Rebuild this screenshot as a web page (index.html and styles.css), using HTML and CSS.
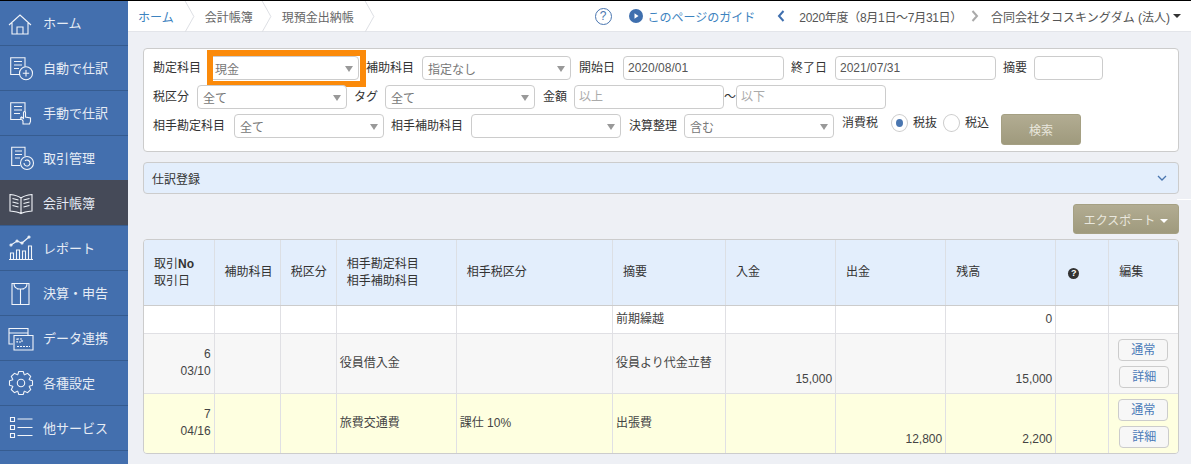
FILE: index.html
```html
<!DOCTYPE html>
<html lang="ja">
<head>
<meta charset="utf-8">
<title>現預金出納帳</title>
<link rel="stylesheet" href="styles.css">
</head>
<body>
<div class="app">
  <nav class="side">
    <a class="nav"><svg class="ni" viewBox="0 0 28 28"><path d="M2 16 13 6l11 10M5 14v11h16V14M10 25v-7h6v7"/></svg>ホーム</a>
    <a class="nav"><svg class="ni" viewBox="0 0 28 28"><path d="M13 20.500H3.700V3.800H18v9M7 7.500h8M7 11h8M7 14.500h5"/><circle cx="19" cy="19.200" r="6.500"/><path d="M19 16v6.400M15.800 19.200h6.400"/></svg>自動で仕訳</a>
    <a class="nav"><svg class="ni" viewBox="0 0 28 28"><path d="M14 20.500H3.700V3.800H18v9M7 7.500h8M7 11h8M7 14.500h6"/><path d="M16 25v-3l-2.500-3 1-1 2 1.500V13.500a1 1 0 0 1 2 0V18l5 1v3.500l-1 2.500z"/></svg>手動で仕訳</a>
    <a class="nav"><svg class="ni" viewBox="0 0 28 28"><path d="M13 21.500H4.700V3.200H18v9M8 7h7M8 10.500h7M8 14h5"/><circle cx="20" cy="19" r="6.500"/><path d="M17 19a3 3 0 1 0 1-2.200"/></svg>取引管理</a>
    <a class="nav on"><svg class="ni" viewBox="0 0 28 28"><path d="M14 9c-3-2.500-7-3-11-3.500V22c4 .4 8 .8 11 2.500 3-1.700 7-2.100 11-2.500V5.500C21 6 17 6.500 14 9zM14 9v15.500M5.500 9.500l6 1.500M5.500 13l6 1.500M5.500 16.500l6 1.500M22.500 9.500l-6 1.500M22.500 13l-6 1.500M22.500 16.500l-6 1.500"/></svg>会計帳簿</a>
    <a class="nav"><svg class="ni" viewBox="0 0 28 28"><path d="M2 25.500h24M3.500 25v-6h3v6M9.500 25v-9h3v9M15.500 25v-8h3v8M21.500 25V12h3v13M4 11l6-4 5 2 7-6"/><circle cx="4" cy="11" r="1"/><circle cx="10" cy="7" r="1"/><circle cx="15" cy="9" r="1"/><circle cx="22" cy="3" r="1"/></svg>レポート</a>
    <a class="nav"><svg class="ni" viewBox="0 0 28 28"><path d="M5 4.500h17v21H5zM7 4.500c0 3 1.500 5 5 5.500M20 4.500c0 3-1.500 5-5 5.500M10 10h7M13.500 10v15.500"/></svg>決算・申告</a>
    <a class="nav"><svg class="ni" viewBox="0 0 28 28"><path d="M6 20H2V4.500h19V11M2 9h19"/><path class="solid" d="M7 11.500h19V26H7z"/><path d="M10 15h5v3h-5zM10 22.500h13" stroke-dasharray="2 1"/></svg>データ連携</a>
    <a class="nav"><svg class="ni" viewBox="-14 -14 28 28"><defs><path id="tooth" d="M-3.300-8.300-2.200-11.500H2.200L3.300-8.300 3.700-8"/></defs><use href="#tooth"/><use href="#tooth" transform="rotate(45)"/><use href="#tooth" transform="rotate(90)"/><use href="#tooth" transform="rotate(135)"/><use href="#tooth" transform="rotate(180)"/><use href="#tooth" transform="rotate(225)"/><use href="#tooth" transform="rotate(270)"/><use href="#tooth" transform="rotate(315)"/><circle r="3.700"/></svg>各種設定</a>
    <a class="nav"><svg class="ni" viewBox="0 0 28 28"><path d="M3.500 3.500h4v4h-4zM3.500 11.500h4v4h-4zM3.500 19.500h4v4h-4zM10.500 5h15M10.500 13.500h15M10.500 21.500h15"/></svg>他サービス</a>
  </nav>

  <main class="main">
    <header class="top">
      <div class="crumbs">
        <a class="crumb link">ホーム</a>
        <svg class="sep" viewBox="0 0 11 32"><path d="M1 0l9 16-9 16"/></svg>
        <span class="crumb mid">会計帳簿</span>
        <svg class="sep" viewBox="0 0 11 32"><path d="M1 0l9 16-9 16"/></svg>
        <span class="crumb">現預金出納帳</span>
        <svg class="sep" viewBox="0 0 11 32"><path d="M1 0l9 16-9 16"/></svg>
      </div>
      <div class="tools">
        <span class="qc">?</span>
        <svg class="play" viewBox="0 0 14 14"><circle cx="7" cy="7" r="7"/><path d="M5.500 4.300 9.500 7l-4 2.700z"/></svg>
        <a class="guide">このページのガイド</a>
        <svg class="arrow left" viewBox="0 0 8 12"><path d="M6.500 1 2 6l4.500 5"/></svg>
        <span class="year">2020年度（8月1日〜7月31日）</span>
        <svg class="arrow right" viewBox="0 0 8 12"><path d="M1.500 1 6 6l-4.500 5"/></svg>
        <span class="corp">合同会社タコスキングダム (法人)</span>
        <i class="caret"></i>
      </div>
    </header>

    <section class="filter">
      <div class="row">
        <label class="lb w56">勘定科目</label>
        <div class="sel s150 hl"><span>現金</span></div>
        <label class="lb w56 m7">補助科目</label>
        <div class="sel s149"><span>指定なし</span></div>
        <label class="lb w44 m8">開始日</label>
        <input class="inp s161" value="2020/08/01">
        <label class="lb w44 m7">終了日</label>
        <input class="inp s161" value="2021/07/31">
        <label class="lb w31 m7">摘要</label>
        <input class="inp s69">
      </div>
      <div class="row">
        <label class="lb w44">税区分</label>
        <div class="sel s150"><span>全て</span></div>
        <label class="lb w31 m7">タグ</label>
        <div class="sel s150"><span>全て</span></div>
        <label class="lb w31 m8">金額</label>
        <input class="inp s150" placeholder="以上">
        <span class="tilde">〜</span>
        <input class="inp s150" placeholder="以下">
      </div>
      <div class="row">
        <label class="lb w81">相手勘定科目</label>
        <div class="sel s150"><span>全て</span></div>
        <label class="lb w80 m7">相手補助科目</label>
        <div class="sel s150"><span></span></div>
        <label class="lb w55 m8">決算整理</label>
        <div class="sel s150"><span>含む</span></div>
        <label class="lb w49 m8 up">消費税</label>
        <span class="radio sel-r"></span><span class="rt">税抜</span>
        <span class="radio"></span><span class="rt">税込</span>
        <button class="btn search">検索</button>
      </div>
    </section>

    <section class="panel">
      <span>仕訳登録</span>
      <svg class="down" viewBox="0 0 10 6"><path d="M1 1l4 4 4-4"/></svg>
    </section>

    <div class="actions">
      <button class="btn export">エクスポート<i class="caret light"></i></button>
    </div>

    <div class="tablewrap">
      <table>
        <colgroup>
          <col class="c71"><col class="c66"><col class="c56"><col class="c120"><col class="c156"><col class="c113"><col class="c110"><col class="c110"><col class="c110"><col class="c53"><col class="c70">
        </colgroup>
        <thead>
          <tr>
            <th class="first">取引<b>No</b><br>取引日</th>
            <th>補助科目</th>
            <th>税区分</th>
            <th>相手勘定科目<br>相手補助科目</th>
            <th>相手税区分</th>
            <th>摘要</th>
            <th>入金</th>
            <th>出金</th>
            <th>残高</th>
            <th><span class="qb">?</span></th>
            <th>編集</th>
          </tr>
        </thead>
        <tbody>
          <tr class="r0">
            <td></td><td></td><td></td><td></td><td></td>
            <td>前期繰越</td><td></td><td></td><td class="num">0</td><td></td><td></td>
          </tr>
          <tr class="r1">
            <td class="num">6<br>03/10</td><td></td><td></td>
            <td>役員借入金</td><td></td>
            <td>役員より代金立替</td>
            <td class="num bot">15,000</td><td></td>
            <td class="num bot">15,000</td><td></td>
            <td class="ed"><a class="mini">通常</a><a class="mini b2">詳細</a></td>
          </tr>
          <tr class="r2">
            <td class="num">7<br>04/16</td><td></td><td></td>
            <td>旅費交通費</td><td>課仕 10%</td>
            <td>出張費</td>
            <td></td><td class="num bot">12,800</td>
            <td class="num bot">2,200</td><td></td>
            <td class="ed"><a class="mini">通常</a><a class="mini b2">詳細</a></td>
          </tr>
        </tbody>
      </table>
    </div>
    <i class="tick"></i>
  </main>
</div>
</body>
</html>
```
FILE: styles.css
```css
* { box-sizing: border-box; }
html, body { margin: 0; padding: 0; height: 464px; overflow: hidden; background: #eef0f5; }
body { font-family: "Liberation Sans", "Noto Sans CJK JP", sans-serif; font-size: 12px; color: #444; border-top: 1px solid #000; }
.app { display: flex; height: 463px; }

.side { width: 128px; flex: none; background: #436fae; }
.nav { display: flex; align-items: center; height: 45px; padding: 0 0 1px 7px; color: #e6ecf5; font-size: 13px; border-bottom: 1px solid #365c90; }
.nav.on { background: #454a58; box-shadow: 0 -1px 0 #454a58; }
.ni { width: 28px; height: 28px; margin-right: 8px; flex: none; fill: none; stroke: #f2f5fa; stroke-width: 1.1; }
.ni .solid { fill: #436fae; }

.main { flex: 1; position: relative; min-width: 0; }
.top { display: flex; justify-content: space-between; align-items: center; height: 31px; background: #fff; border-bottom: 1px solid #e3e5ea; }
.crumbs { display: flex; align-items: center; height: 100%; padding-left: 10px; }
.crumb { color: #666; }
.crumb.link { color: #3d83c0; }
.crumb.mid { margin-right: -2px; }
.sep { width: 11px; height: 31px; margin: 0 10px; fill: none; stroke: #dcdee3; stroke-width: 1; }
.tools { display: flex; align-items: center; padding-right: 10px; }
.qc { width: 17px; height: 17px; border: 1.5px solid #4a76b0; border-radius: 50%; color: #4a76b0; text-align: center; line-height: 14px; font-size: 12px; margin-right: 17px; }
.play { width: 14px; height: 14px; margin-right: 5px; }
.play circle { fill: #3f6fae; }
.play path { fill: #fff; }
.guide { color: #3d83c0; margin-right: 22px; }
.arrow { width: 8px; height: 12px; fill: none; stroke-width: 2; }
.arrow.left { stroke: #3f6fae; margin-right: 14px; }
.arrow.right { stroke: #aaa; margin-left: 9px; margin-right: 12px; }
.year { letter-spacing: -0.3px; }
.year, .corp { color: #555; }
.caret { display: inline-block; width: 0; height: 0; border: 4px solid transparent; border-top-color: #333; border-bottom: 0; margin-left: 3px; }
.caret.light { border-top-color: #fff; margin-left: 5px; vertical-align: 2px; }

.filter { margin: 16px 12px 0 15px; height: 104px; background: #fff; border: 1px solid #ccc; border-radius: 4px; padding: 7px 9px 0; }
.row { display: flex; align-items: flex-start; height: 29px; }
.lb { flex: none; font-size: 12px; color: #333; line-height: 24px; white-space: nowrap; }
.lb.up { line-height: 18px; }
.w31 { width: 31px; } .w44 { width: 44px; } .w49 { width: 49px; } .w55 { width: 55px; } .w56 { width: 56px; }
.w80 { width: 80px; } .w81 { width: 81px; }
.m7 { margin-left: 7px; } .m8 { margin-left: 8px; }
.sel, .inp { flex: none; height: 24px; border: 1px solid #ccc; border-radius: 4px; background: #fff; color: #555; font: 12px "Liberation Sans", "Noto Sans CJK JP", sans-serif; }
.sel { position: relative; display: flex; align-items: center; padding-left: 5px; color: #777; }
.sel::before { content: ""; position: absolute; right: 5px; top: 9px; border: 4px solid transparent; border-top: 6px solid #999; border-bottom: 0; }
.inp { padding: 0 4px; outline: none; }
.inp::placeholder { color: #aaa; opacity: 1; }
.s69 { width: 69px; } .s149 { width: 149px; } .s150 { width: 150px; } .s161 { width: 161px; }
.hl::after { content: ""; position: absolute; top: -7px; left: -3px; right: -8px; bottom: -8px; border: 6px solid #fb8a0a; }
.tilde { width: 12px; flex: none; line-height: 24px; text-align: center; color: #333; }
.radio { flex: none; width: 17px; height: 18px; border: 1px solid #ccc; border-radius: 50%; background: #fff; position: relative; }
.sel-r::after { content: ""; position: absolute; left: 4px; top: 4px; width: 7px; height: 8px; border-radius: 50%; background: #4a76b0; }
.rt { flex: none; width: 35px; padding-left: 5px; line-height: 18px; color: #333; }
.rt:last-of-type { width: 41px; }
.btn { border: 1px solid #a5a083; border-radius: 3px; background: linear-gradient(#b2ac92, #9f9a7d); color: #e9e7dd; font: 12px "Liberation Sans", "Noto Sans CJK JP", sans-serif; padding: 0; }
.search { width: 80px; height: 31px; flex: none; }

.panel { display: flex; justify-content: space-between; align-items: center; margin: 10px 12px 0 15px; height: 32px; padding: 0 11px 0 8px; background: #e3eefc; border: 1px solid #ccc; border-radius: 4px; color: #333; }
.down { width: 10px; height: 6px; fill: none; stroke: #4a76b0; stroke-width: 1.3; }
.actions { display: flex; justify-content: flex-end; margin: 10px 12px 0 0; }
.export { width: 106px; height: 30px; }
.tablewrap { margin: 5px 12px 0 15px; width: 1036px; height: 215px; border: 1px solid #ccc; border-radius: 4px; overflow: hidden; }
table { width: 1036px; margin: 0 -1px; table-layout: fixed; border-collapse: collapse; }
.c71 { width: 71px; } .c66 { width: 66px; } .c56 { width: 56px; } .c120 { width: 120px; } .c156 { width: 156px; } .c113 { width: 113px; } .c110 { width: 110px; } .c53 { width: 53px; } .c70 { width: 70px; }
th { height: 65px; padding: 1px 0 0 10px; text-align: left; font-weight: normal; line-height: 17px; color: #333; background: #e3eefc; border-right: 1px solid #dcdfe4; border-bottom: 1px solid #ccc; }
th.first { padding-left: 11px; }
td { padding: 0 3px; line-height: 17px; color: #444; border-right: 1px solid #e0e0e4; border-bottom: 1px solid #e0e0e4; }
th:last-child, td:last-child { border-right: 0; }
tbody tr:last-child td { border-bottom: 0; }
.r0 td { height: 28px; padding-top: 1px; background: #fff; }
.r1 td { height: 60px; background: #f7f7f7; }
.r2 td { height: 60px; background: #feffe0; }
.num { text-align: right; }
.bot { vertical-align: bottom; padding-bottom: 5px; }
.qb { display: inline-block; width: 11px; height: 11px; border-radius: 50%; background: #333; color: #fff; font-weight: bold; font-size: 9px; line-height: 11px; text-align: center; margin-left: 2px; }
.ed { padding: 0; }
.mini { display: block; width: 50px; height: 22px; margin-left: 9px; border: 1px solid #ccc; border-radius: 4px; background: #f7f7f7; color: #4a7ab8; line-height: 20px; text-align: center; }
.b2 { margin-top: 5px; margin-left: 10px; }
.tick { position: absolute; right: 0; top: 198px; width: 14px; height: 1px; background: #fff; }
```
